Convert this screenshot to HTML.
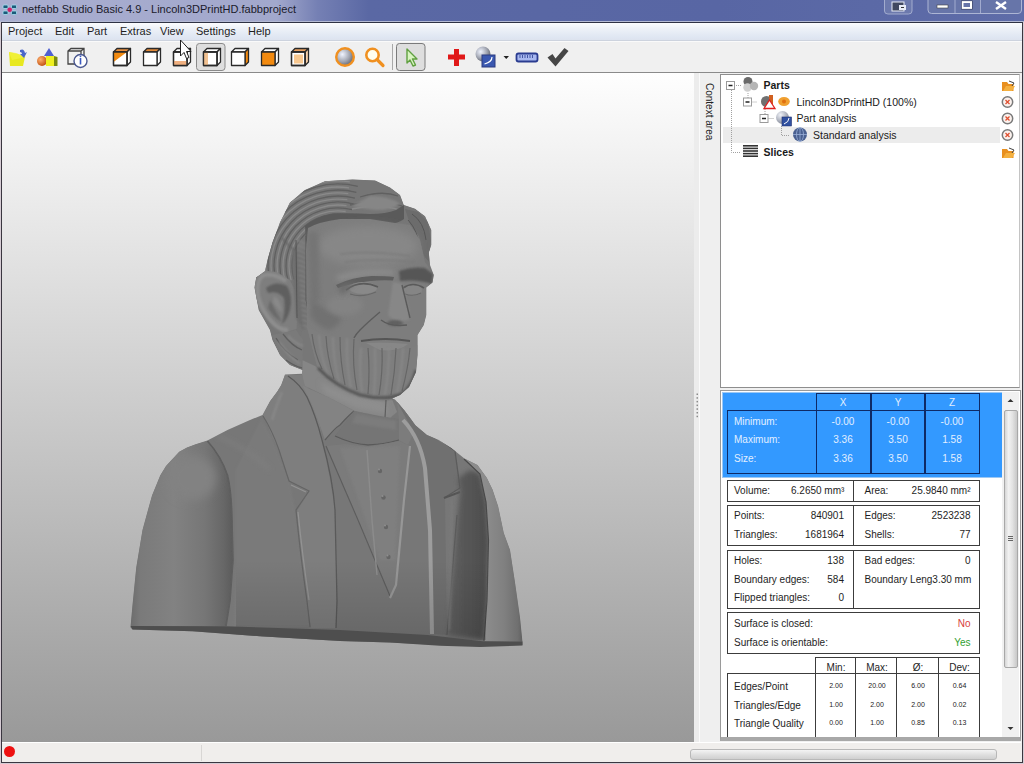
<!DOCTYPE html>
<html><head><meta charset="utf-8">
<style>
*{box-sizing:border-box}
html,body{margin:0;padding:0;width:1024px;height:764px;overflow:hidden;background:#d6ccd4;font-family:"Liberation Sans",sans-serif}
.a{position:absolute}
#title{left:0;top:0;width:1024px;height:22px;background:linear-gradient(90deg,#a9aed0 0%,#a2a8cc 27%,#7580b4 31%,#5a68a4 36%,#5866a4 70%,#5e6ca8 100%);border-bottom:1px solid #b4bad4}
#ttxt{left:22px;top:3px;font-size:11px;color:#1a1a2a;white-space:nowrap}
#frame{left:1px;top:22px;width:1022px;height:741px;background:#f0f0f0;border:1px solid #3a3640;border-top-color:#2e3244}
#menu{left:2px;top:23px;width:1020px;height:18px;background:linear-gradient(#fbfcfe 0%,#eef2f8 30%,#dfe6f2 85%,#dde3ee 100%);border-bottom:1px solid #cdd3de}
.mi{position:absolute;top:2px;font-size:11px;color:#1e1e1e;white-space:nowrap}
#tool{left:2px;top:41px;width:1020px;height:32px;background:#f0f0f0;border-top:1px solid #fafafa;border-bottom:1px solid #8a8a8a}
#view{left:2px;top:73px;width:692px;height:669px;background:linear-gradient(#fefefe,#999)}
#split{left:694px;top:73px;width:6px;height:669px;background:#ececec}
#ctx{left:700px;top:73px;width:20px;height:667px;background:#efefef}
#ctxt{left:715px;top:83px;font-size:10px;color:#222;transform-origin:0 0;transform:rotate(90deg);white-space:nowrap}
#tree{left:720px;top:74px;width:300px;height:314px;background:#fff;border:1px solid #8e8e8e;border-right-color:#c4c4c4}
#stats{left:720px;top:390px;width:301px;height:351px;background:#fff;border:1px solid #9a9a9a;border-bottom:4px solid #a8a8a8;overflow:hidden}
#status{left:2px;top:742px;width:1019px;height:20px;background:#f0eeec;border-top:1px solid #fff}

.t{position:absolute;font-size:10px;line-height:12px;white-space:nowrap;color:#1e1e1e;margin-top:1px}
.tr{position:absolute;font-size:10.5px;line-height:13px;white-space:nowrap;color:#1a1a1a}
.tb{font-weight:bold;font-size:10.5px}
.w{color:#e2efff;margin-top:0}
.bx{position:absolute;border:1px solid #3c3c3c}
.vl{position:absolute;width:1px;background:#3c3c3c}
.nv{position:absolute;border:1.5px solid #0e2a66}
.nvl{position:absolute;width:1.5px;background:#0e2a66}
.c{text-align:center}
.r{text-align:right}
.sm{font-size:7px;line-height:9px;color:#222;margin-top:-0.5px}
</style></head><body>
<div id="title" class="a"></div>
<div id="ttxt" class="a">netfabb Studio Basic 4.9 - Lincoln3DPrintHD.fabbproject</div>
<svg class="a" style="left:0;top:0" width="1024" height="22">
<g><rect x="3" y="5" width="5" height="3.5" rx="1" fill="#1a5a7a" stroke="#a8e0f0" stroke-width=".8"/><rect x="11.5" y="5" width="5" height="3.5" rx="1" fill="#1a5a7a" stroke="#a8e0f0" stroke-width=".8"/><rect x="3" y="11" width="5" height="3.5" rx="1" fill="#1a5a7a" stroke="#a8e0f0" stroke-width=".8"/><rect x="11.5" y="11" width="5" height="3.5" rx="1" fill="#1a5a7a" stroke="#a8e0f0" stroke-width=".8"/><circle cx="9.7" cy="9.7" r="2.3" fill="#d0206a"/></g>
<path d="M884.5,-2 V11 Q884.5,14 888,14 H908.5 Q912,14 912,11 V-2" fill="#7480b0" stroke="#c0c8e0" stroke-width="1" opacity=".7"/>
<rect x="892" y="2" width="12" height="9" fill="#404860" stroke="#e8ecf8" stroke-width="1"/><rect x="899" y="5" width="7" height="5" fill="#e8ecf8"/><path d="M901,7.5 h3" stroke="#333" stroke-width="1"/>
<path d="M928,-2 V10 Q928,13.5 931.5,13.5 H1018 Q1021.5,13.5 1021.5,10 V-2" fill="#6a78aa" stroke="#c0c8e0" stroke-width="1" opacity=".8"/>
<path d="M955,0 V13 M980.5,0 V13" stroke="#b0b8d8" stroke-width="1" opacity=".8"/>
<rect x="937" y="5" width="11" height="3" fill="#fff" stroke="#444" stroke-width=".6"/>
<rect x="962.5" y="2" width="8.5" height="6" fill="none" stroke="#fff" stroke-width="2"/><rect x="961.3" y="0.8" width="11" height="8.4" fill="none" stroke="#3a4060" stroke-width=".6"/>
<path d="M996,2 L1006,9 M1006,2 L996,9" stroke="#fff" stroke-width="2.4"/>
</svg>
<div id="frame" class="a"></div>
<div id="menu" class="a">
<span class="mi" style="left:6px">Project</span>
<span class="mi" style="left:53px">Edit</span>
<span class="mi" style="left:85px">Part</span>
<span class="mi" style="left:118px">Extras</span>
<span class="mi" style="left:158px">View</span>
<span class="mi" style="left:194px">Settings</span>
<span class="mi" style="left:246px">Help</span>
</div>
<div id="tool" class="a"></div>
<svg class="a" style="left:0;top:40px" width="600" height="33" viewBox="0 40 600 33">
<defs>
<radialGradient id="gsph" cx=".35" cy=".35" r=".7"><stop offset="0" stop-color="#f0f4ff"/><stop offset=".6" stop-color="#a0a4b0"/><stop offset="1" stop-color="#606470"/></radialGradient>
<radialGradient id="gor" cx=".35" cy=".35" r=".7"><stop offset="0" stop-color="#ffb070"/><stop offset="1" stop-color="#c05010"/></radialGradient>
</defs>
<!-- open project -->
<path d="M9,52 L18,54 L25,57 L23,66 L10,66 Z" fill="#e8e820"/><path d="M9,52 L16,53 L26,57 L12,60 Z" fill="#f4f440" opacity=".7"/>
<path d="M20,50 Q24,48 25,53 L27,52 L24,58 L20,54 L22,54 Q22,52 20,52 Z" fill="#4a66c8"/>
<!-- new part -->
<circle cx="42" cy="61" r="5" fill="url(#gor)"/>
<path d="M49,48 L54,56 L44,56 Z" fill="#5060d0"/>
<rect x="46" y="56" width="8" height="10" fill="#f0f020"/><path d="M54,56 L57.5,57 V66 L54,66 Z" fill="#7a8a10"/>
<!-- part info -->
<g fill="none" stroke="#444" stroke-width="1.3"><path d="M68,51 L71,48.5 H84 V61 L81,64 H68 Z M68,51 H81 V64 M81,51 L84,48.5"/></g>
<circle cx="80.5" cy="61" r="6.5" fill="#fff" stroke="#4a5890" stroke-width="1.4"/><path d="M80.5,58 V64.5" stroke="#3a58c0" stroke-width="1.6"/><circle cx="80.5" cy="56.3" r=".9" fill="#3a58c0"/>
<!-- cubes -->
<g stroke="#2a2a2a" stroke-width="1.3" stroke-linejoin="round">
<g transform="translate(113,48)"><path d="M0.5,4 L4,0.5 H17.5 L14,4 Z" fill="#e89040"/><path d="M14,4 L17.5,0.5 V14 L14,17.5 Z" fill="#fff"/><path d="M0.5,4 H14 V17.5 H0.5 Z" fill="#fff"/><path d="M0.5,4 H14 L0.5,14 Z" fill="#f28a10" stroke="none"/><path d="M0.5,4 H14 V17.5 H0.5 Z" fill="none"/></g>
<g transform="translate(143,48)"><path d="M0.5,4 L4,0.5 H17.5 L14,4 Z" fill="#e08838"/><path d="M14,4 L17.5,0.5 V14 L14,17.5 Z" fill="#fff"/><path d="M0.5,4 H14 V17.5 H0.5 Z" fill="#fff"/></g>
<g transform="translate(173,48)"><path d="M0.5,4 L4,0.5 H17.5 L14,4 Z" fill="#fff"/><path d="M14,4 L17.5,0.5 V14 L14,17.5 Z" fill="#fff"/><path d="M0.5,4 H14 V17.5 H0.5 Z" fill="#fff"/><rect x="1" y="13" width="12.5" height="4" fill="#f0b080" stroke="none"/><path d="M0.5,4 H14 V17.5 H0.5 Z" fill="none"/></g>
</g>
<!-- pressed button -->
<rect x="196.5" y="43.5" width="28.5" height="27" rx="3" fill="#dedede" stroke="#8a8a8a" stroke-width="1"/>
<g stroke="#2a2a2a" stroke-width="1.3" stroke-linejoin="round">
<g transform="translate(203,48)"><path d="M0.5,4 L4,0.5 H17.5 L14,4 Z" fill="#fff"/><path d="M14,4 L17.5,0.5 V14 L14,17.5 Z" fill="#fff"/><path d="M0.5,4 H14 V17.5 H0.5 Z" fill="#fff"/><rect x="1" y="4.5" width="4" height="12.5" fill="#f0c090" stroke="none"/><path d="M0.5,4 H14 V17.5 H0.5 Z" fill="none"/></g>
<g transform="translate(231,48)"><path d="M0.5,4 L4,0.5 H17.5 L14,4 Z" fill="#fff"/><path d="M14,4 L17.5,0.5 V14 L14,17.5 Z" fill="#f28a10"/><path d="M0.5,4 H14 V17.5 H0.5 Z" fill="#fff"/></g>
<g transform="translate(261,48)"><path d="M0.5,4 L4,0.5 H17.5 L14,4 Z" fill="#fff"/><path d="M14,4 L17.5,0.5 V14 L14,17.5 Z" fill="#fff"/><path d="M0.5,4 H14 V17.5 H0.5 Z" fill="#f28a10"/></g>
<g transform="translate(291,48)"><path d="M0.5,4 L4,0.5 H17.5 L14,4 Z" fill="#e8a060"/><path d="M14,4 L17.5,0.5 V14 L14,17.5 Z" fill="#f8d0a8"/><path d="M0.5,4 H14 V17.5 H0.5 Z" fill="#fff"/><rect x="3" y="6.5" width="9" height="9" fill="#f8c890" stroke="none"/><path d="M0.5,4 H14 V17.5 H0.5 Z" fill="none"/></g>
</g>
<!-- sphere -->
<circle cx="345" cy="57" r="8.8" fill="url(#gsph)" stroke="#f09020" stroke-width="2.4"/>
<!-- magnifier -->
<circle cx="372.5" cy="55" r="6.2" fill="#fffef0" stroke="#f09020" stroke-width="2.6"/><path d="M377,59.5 L383,65.5" stroke="#f09020" stroke-width="3.2" stroke-linecap="round"/>
<!-- separator -->
<path d="M392.5,44 V70" stroke="#a8a8a8" stroke-width="1"/>
<!-- pressed select -->
<rect x="396.5" y="43.5" width="28.5" height="27" rx="3" fill="#dedede" stroke="#7a7a7a" stroke-width="1"/>
<path d="M407,49 L407,63 L410,60 L413,66 L415.5,65 L412.5,59 L417,59 Z" fill="#d8f4c0" stroke="#60a040" stroke-width="1.4" stroke-linejoin="round"/>
<!-- red cross -->
<path d="M454,49 h5 v5.5 h6 v5 h-6 v6.5 h-5 v-6.5 h-6 v-5 h6 z" fill="#e01818"/>
<!-- analysis -->
<circle cx="483" cy="54" r="7.5" fill="url(#gsph)"/><rect x="482" y="55" width="13" height="12" fill="#3a58b0" stroke="#2a3a80" stroke-width="1"/><path d="M484.5,64 Q492,62 492,57" stroke="#fff" stroke-width="1.2" fill="none"/>
<path d="M503.5,56 h5.5 l-2.75,3 z" fill="#222"/>
<!-- ruler -->
<rect x="516.5" y="53.5" width="21" height="8" rx="2" fill="#a8b8f0" stroke="#2a3c90" stroke-width="1.8"/>
<path d="M520,55 v3 M522.5,55 v3 M525,55 v3 M527.5,55 v3 M530,55 v3 M532.5,55 v3" stroke="#2a3c90" stroke-width=".8"/>
<!-- check -->
<path d="M547.5,57.5 L552.5,54 L555.5,58.5 L564.5,48 L568.5,51 L555.5,66.5 Z" fill="#464646"/>
<!-- mouse cursor -->
<path d="M180.5,40 L180.5,56 L184,52.5 L186.5,58.5 L189,57.5 L186.5,51.5 L191,51.5 Z" fill="#fff" stroke="#222" stroke-width="1" stroke-linejoin="round"/>
</svg>
<div id="view" class="a"></div>
<svg class="a" style="left:2px;top:73px" width="692" height="669" viewBox="2 73 692 669">
<defs>
<filter id="bl0" x="-20%" y="-20%" width="140%" height="140%"><feGaussianBlur stdDeviation=".6"/></filter>
<filter id="bl1" x="-20%" y="-20%" width="140%" height="140%"><feGaussianBlur stdDeviation="1.1"/></filter>
<filter id="bl2" x="-30%" y="-30%" width="160%" height="160%"><feGaussianBlur stdDeviation="2.5"/></filter>
<filter id="bl3" x="-30%" y="-30%" width="160%" height="160%"><feGaussianBlur stdDeviation="5"/></filter>
<linearGradient id="gsl" x1="130" y1="0" x2="234" y2="0" gradientUnits="userSpaceOnUse"><stop offset="0" stop-color="#6c6c6c"/><stop offset=".1" stop-color="#7a7a7a"/><stop offset=".42" stop-color="#828282"/><stop offset=".72" stop-color="#767676"/><stop offset=".9" stop-color="#676767"/><stop offset="1" stop-color="#5a5a5a"/></linearGradient>
<linearGradient id="grs" x1="486" y1="0" x2="522" y2="0" gradientUnits="userSpaceOnUse"><stop offset="0" stop-color="#8c8c8c"/><stop offset=".5" stop-color="#808080"/><stop offset=".88" stop-color="#707070"/><stop offset="1" stop-color="#626262"/></linearGradient>
<linearGradient id="grc" x1="446" y1="0" x2="488" y2="0" gradientUnits="userSpaceOnUse"><stop offset="0" stop-color="#626262"/><stop offset=".5" stop-color="#565656"/><stop offset="1" stop-color="#4c4c4c"/></linearGradient>
<linearGradient id="gbot" x1="0" y1="560" x2="0" y2="636" gradientUnits="userSpaceOnUse"><stop offset="0" stop-color="#000" stop-opacity="0"/><stop offset="1" stop-color="#000" stop-opacity=".13"/></linearGradient>
<clipPath id="csil"><path d="M280,222.5 L290,202.5 L305,190 L325,181.25 L352.5,179.5 L375,180.5 L390,187.5 L400,195 L403.75,205 L415,208.75 L425,216.25 L431.25,230 L431.25,245 L428.75,252.5 L430,265 L433.75,275 L432.5,282.5 L426.25,287.5 L426.25,300 L426.25,315 L423.75,325 L417.5,335 L417.5,355 L416,372 L409,387 L400,395 L392,398.5 L395,399.4 L404.4,410.6 L415.6,425.6 L426.9,435 L438.1,439.7 L451.25,448.1 L464.4,458.4 L477.5,465 L486.9,478.1 L492.5,489.4 L498.1,506.25 L503.75,533 L510,550 L515,582.5 L520,617.5 L522.5,642.5 L522.5,645 L480,646.25 L440,645 L390,642.5 L340,641 L260,636.25 L192.5,631.25 L132.5,629.5 L130.5,627.5 L132.5,605 L136.25,567.5 L142.5,530 L152,495.4 L160.3,475.3 L166,466 L172,459.4 L179.2,451.8 L187,447.5 L195.7,444.2 L207.4,440.4 L227.5,430 L250,420 L262.5,415 L270,401.25 L277.5,391.25 L281.25,385 L285,374.4 L302,373.75 L302.5,370 L290,365 L280,355 L272.5,340 L270,330 L258.75,310 L254.5,287.5 L256.25,277.5 L265,271.25 L267.5,260 L272.5,242.5 Z"/></clipPath>
</defs>
<!-- silhouette -->
<path fill="#777" d="M280,222.5 L290,202.5 L305,190 L325,181.25 L352.5,179.5 L375,180.5 L390,187.5 L400,195 L403.75,205 L415,208.75 L425,216.25 L431.25,230 L431.25,245 L428.75,252.5 L430,265 L433.75,275 L432.5,282.5 L426.25,287.5 L426.25,300 L426.25,315 L423.75,325 L417.5,335 L417.5,355 L416,372 L409,387 L400,395 L392,398.5 L395,399.4 L404.4,410.6 L415.6,425.6 L426.9,435 L438.1,439.7 L451.25,448.1 L464.4,458.4 L477.5,465 L486.9,478.1 L492.5,489.4 L498.1,506.25 L503.75,533 L510,550 L515,582.5 L520,617.5 L522.5,642.5 L522.5,645 L480,646.25 L440,645 L390,642.5 L340,641 L260,636.25 L192.5,631.25 L132.5,629.5 L130.5,627.5 L132.5,605 L136.25,567.5 L142.5,530 L152,495.4 L160.3,475.3 L166,466 L172,459.4 L179.2,451.8 L187,447.5 L195.7,444.2 L207.4,440.4 L227.5,430 L250,420 L262.5,415 L270,401.25 L277.5,391.25 L281.25,385 L285,374.4 L302,373.75 L302.5,370 L290,365 L280,355 L272.5,340 L270,330 L258.75,310 L254.5,287.5 L256.25,277.5 L265,271.25 L267.5,260 L272.5,242.5 Z"/>

<g clip-path="url(#csil)">
<!-- ===== BODY ===== -->
<!-- left sleeve -->
<path fill="url(#gsl)" d="M195.7,444.2 L207.4,441 Q221,456 227.5,475.3 Q232,493 232.2,530 L233,560 L230,601 L226,626 L130.5,626 L132.5,605 L136.25,567.5 L142.5,530 L152,495.4 L160.3,475.3 L166,466 L172,459.4 L179.2,451.8 L187,447.5 Z"/>
<ellipse cx="192" cy="478" rx="24" ry="22" fill="#828282" filter="url(#bl3)"/>

<path fill="none" stroke="#5e5e5e" stroke-width="1.6" filter="url(#bl0)" d="M207.4,441 Q221,456 227.5,475.3 Q232,493 232.2,530 L233,560 L230,601 L226,626"/>
<!-- left coat body -->
<path fill="#7a7a7a" filter="url(#bl1)" d="M236,470 L262,418 L275,445 L290,482 L295,510 L307,601 L310,626 L234,626 L236,560 Z"/>
<path fill="none" stroke="#7f7f7f" stroke-width="3" filter="url(#bl2)" d="M218,436 Q250,450 270,470"/>
<!-- left lapel -->
<path fill="#7e7e7e" filter="url(#bl0)" d="M285,375 L302,375 L310,392 L318,415 L322,438 L330,480 L335,510 L337,601 L336,628 L311,628 L307,601 L300,550 L297,511 L309,492 L290,482 L277,447 L263,415 L270,401 L281,385 Z"/>
<path fill="none" stroke="#5a5a5a" stroke-width="1.3" filter="url(#bl0)" d="M288,376 Q300,384 307,397 Q316,416 322,440 Q333,480 335,510 L337,601 L336,628"/>
<path fill="none" stroke="#656565" stroke-width="1.2" filter="url(#bl0)" d="M263,416 Q272,430 279,450 L289,481 L309,491 L296,510 Q300,552 307,601 L310,627"/>
<path fill="none" stroke="#939393" stroke-width="1.2" filter="url(#bl0)" d="M291,485 L306,492 M298,512 Q302,552 309,600"/>
<path fill="none" stroke="#8a8a8a" stroke-width="2" filter="url(#bl1)" d="M282,392 Q275,410 272,420"/>

<!-- neck -->
<path fill="#868686" filter="url(#bl0)" d="M302,360 L315,366 L330,380 L350,391 L372,398 L392,399 L397,412 L390,418 L355,411 L330,398 L305,386 L302,374 Z"/>
<path fill="#8e8e8e" filter="url(#bl2)" d="M320,382 L350,395 L385,402 L388,414 L355,408 L325,394 Z"/>
<path fill="none" stroke="#5e5e5e" stroke-width="1.2" filter="url(#bl0)" d="M386,400 L385,418"/>
<!-- shirt collar wing (left) -->
<path fill="#838383" filter="url(#bl0)" d="M303,386 L330,398 L354,411 L340,425 L325,440 L318,420 L310,400 Z"/>
<path fill="none" stroke="#5c5c5c" stroke-width="1.2" filter="url(#bl0)" d="M325,440 Q335,428 340,425 Q348,416 354,411"/>
<!-- collar band -->
<path fill="#747474" filter="url(#bl0)" d="M354,411 L378,416 L399,419 L399,440 L368,445 L335,436 Z"/>
<path fill="#7c7c7c" filter="url(#bl1)" d="M356,414 L396,421 L396,430 L352,423 Z"/>
<path fill="none" stroke="#5a5a5a" stroke-width="1.3" filter="url(#bl0)" d="M335,436 Q352,444 368,445 Q386,444 399,440"/>
<!-- shirt right wing -->
<path fill="#7c7c7c" filter="url(#bl0)" d="M397,400 L410,412 L415,430 L408,445 L399,440 L399,419 Z"/>
<!-- vest / shirt front -->
<path fill="#7b7b7b" d="M326,446 L345,444 L368,447 L399,441 L410,446 L404,500 L396,585 L390,597 Z"/>
<path fill="#7f7f7f" filter="url(#bl1)" d="M340,448 L400,446 L395,560 L380,560 Z"/>
<path fill="none" stroke="#5e5e5e" stroke-width="1.2" filter="url(#bl0)" d="M326,446 L358,520 L390,596"/>
<path fill="none" stroke="#979797" stroke-width="2.2" filter="url(#bl0)" d="M410,446 L404,500 L396,585 L390,598"/>
<path fill="none" stroke="#8c8c8c" stroke-width="1.4" filter="url(#bl0)" d="M367,450 L372,520 L377,575"/>
<g fill="#656565" filter="url(#bl0)"><circle cx="380" cy="471" r="2.2"/><circle cx="383.5" cy="497.5" r="2.2"/><circle cx="386" cy="527" r="2.2"/><circle cx="388.5" cy="557" r="2.2"/></g>
<g fill="#8e8e8e" filter="url(#bl0)"><circle cx="379" cy="469.5" r="1"/><circle cx="382.5" cy="496" r="1"/><circle cx="385" cy="525.5" r="1"/><circle cx="387.5" cy="555.5" r="1"/></g>
<!-- right lapel -->
<path fill="#707070" filter="url(#bl0)" d="M396,400 L410,414 L426,432 L455,452 L460,488 L445,498 L447,635 L432,634 L431,540 L426,470 L418,440 Z"/>
<path fill="none" stroke="#9d9d9d" stroke-width="4" filter="url(#bl0)" d="M403,420 Q420,438 425,468 L430,530 L432,634"/>
<path fill="none" stroke="#5c5c5c" stroke-width="1.3" filter="url(#bl0)" d="M398,402 Q425,430 455,451 L460,488 L444,498 M457,515 L447,635"/>
<path fill="none" stroke="#555" stroke-width="2" filter="url(#bl0)" d="M444,498 L460,492"/>
<!-- right coat darker -->
<path fill="url(#grc)" filter="url(#bl2)" d="M458,478 L470,470 L480,474 L486,502 L488.5,540 L487,600 L484,640 L447.5,635 L457.5,515 L460,492 Z"/>
<path fill="none" stroke="#7a7a7a" stroke-width="2" filter="url(#bl1)" d="M452,500 L449,630"/>
<!-- right sleeve -->
<path fill="url(#grs)" d="M464.4,458.4 L477.5,465 L486.9,478.1 L492.5,489.4 L498.1,506.25 L503.75,533 L510,550 L515,582.5 L520,617.5 L522.5,641.5 L484,641.25 L487,600 L488.5,540 L486,502 L480,474 Z"/>
<path fill="none" stroke="#4a4a4a" stroke-width="1.2" filter="url(#bl0)" d="M464,459 L480,474 L486,502 L488.5,540 L487,600 L484,641"/>

<!-- ===== HEAD ===== -->
<!-- hair base -->
<path fill="#767676" d="M272.5,242.5 L280,222.5 L290,202.5 L305,190 L325,181.25 L352.5,179.5 L375,180.5 L390,187.5 L400,195 L403.75,205 L415,208.75 L425,216.25 L431.25,230 L431.25,245 L428.75,252.5 L430,265 L425,262 L420,240 L410,224 L395,222 L370,218 L340,218 L318,222 L308,228 L306,250 L307,290 L312,320 L303,326 L300,340 L302.5,370 L290,365 L280,355 L272.5,340 L270,330 L258.75,310 L254.5,287.5 L256.25,277.5 L265,271.25 L267.5,260 Z"/>
<!-- front lock highlight -->
<!-- hair grooves -->
<path fill="none" stroke="#606060" stroke-width="1.3" filter="url(#bl0)" d="M294.0,279.4 A46,46 0 0 1 349.1,221.4 M288.3,281.2 A52,52 0 0 1 350.6,215.5 M282.5,283.0 A58,58 0 0 1 352.0,209.7 M276.8,284.7 A64,64 0 0 1 353.5,203.9 M271.1,286.5 A70,70 0 0 1 354.9,198.1 M265.3,288.2 A76,76 0 0 1 356.4,192.3 M259.6,290.0 A82,82 0 0 1 357.8,186.4 M350,205 Q378,198 402,206 M360,197 Q382,190 398,196"/>
<path fill="none" stroke="#8a8a8a" stroke-width="1.3" filter="url(#bl0)" d="M291.1,280.3 A49,49 0 0 1 344.8,217.5 M285.4,282.1 A55,55 0 0 1 345.7,211.5 M279.7,283.8 A61,61 0 0 1 346.5,205.6 M273.9,285.6 A67,67 0 0 1 347.3,199.7 M268.2,287.3 A73,73 0 0 1 348.2,193.7 M262.5,289.1 A79,79 0 0 1 349.0,187.8 M256.7,290.9 A85,85 0 0 1 349.8,181.8 M352,209 Q378,203 400,210"/>
<path fill="none" stroke="#626262" stroke-width="1.6" filter="url(#bl1)" d="M282,238 Q292,250 303,256"/>
<!-- front lock shadow -->
<path fill="#5a5a5a" filter="url(#bl0)" d="M305,226 Q315,217 333,213.5 Q355,213 370,214 Q386,214 396,210 L404,205 L404,219 Q396,225 384,223 Q366,220 348,219 Q328,220 312,228 Q308,236 306,244 Z"/>
<path fill="#868686" filter="url(#bl1)" d="M370,196 Q390,196 400,204 Q392,210 376,210 Q360,208 352,206 Z"/>
<!-- right hair -->
<path fill="#6c6c6c" filter="url(#bl0)" d="M405,209 L418,212 L428,222 L431,240 L429,262 L424,256 L419,236 L410,224 Z"/>
<path fill="none" stroke="#555" stroke-width="1" filter="url(#bl0)" d="M412,214 Q424,222 426,240 M408,220 Q418,230 420,250"/>
<!-- left side hair grooves -->
<path fill="none" stroke="#5a5a5a" stroke-width="1" filter="url(#bl0)" d="M288,336 Q296,350 300,368 M278,338 Q286,352 292,362"/>
<!-- ear -->
<path fill="#7e7e7e" filter="url(#bl0)" d="M255.3,280 L258,273.3 L263.3,270.6 L276.6,272 L289.8,280 L296.5,293.2 L297.8,313 L296.5,329 L283.2,333 L270,322.4 L260.6,310.5 L255.3,297.2 Z"/>
<path fill="none" stroke="#8e8e8e" stroke-width="4" filter="url(#bl1)" d="M286,281 Q272,272 262,276 Q256,282 258,296 Q262,312 274,324 Q280,330 288,330"/>
<path fill="#5e5e5e" filter="url(#bl1)" d="M266,288 Q276,280 287,286 Q293,296 290,310 Q287,320 282,324 Q286,310 284,298 Q278,290 268,293 Z"/>
<path fill="#6a6a6a" filter="url(#bl1)" d="M270,300 Q276,312 282,322 Q274,318 268,308 Z"/>
<path fill="#898989" filter="url(#bl1)" d="M274,296 Q281,300 282,312 Q278,310 273,302 Z"/>
<!-- rope hair between ear and face -->
<path fill="#6e6e6e" filter="url(#bl1)" d="M292,250 L306,250 L307,290 L312,320 L303,330 L296,318 L294,290 Z"/>
<path fill="none" stroke="#808080" stroke-width="1.8" filter="url(#bl1)" d="M296.0,240 q5,1 9,4 M296.4,245 q5,1 9,4 M296.8,250 q5,1 9,4 M297.2,255 q5,1 9,4 M297.6,260 q5,1 9,4 M298.0,265 q5,1 9,4 M298.4,270 q5,1 9,4 M298.8,275 q5,1 9,4 M299.2,280 q5,1 9,4 M299.6,285 q5,1 9,4 M300.0,290 q5,1 9,4 M300.4,295 q5,1 9,4 M300.8,300 q5,1 9,4 M301.2,305 q5,1 9,4 M301.6,310 q5,1 9,4 M302.0,315 q5,1 9,4 M302.4,320 q5,1 9,4 M302.8,325 q5,1 9,4"/>
<path fill="none" stroke="#555" stroke-width="1" filter="url(#bl0)" d="M296,240 L297,318 M306,236 L306,300 L310,322"/>
<!-- hair behind ear -->
<path fill="#7a7a7a" filter="url(#bl0)" d="M272,335 L283,333 L296,330 L303,340 L302.5,370 L290,365 L280,355 Z"/>
<path fill="none" stroke="#5e5e5e" stroke-width="1.3" filter="url(#bl0)" d="M276,338 Q284,352 298,360 M283,334 Q292,346 302,350 M286,360 Q294,366 302,368"/>
<path fill="none" stroke="#8c8c8c" stroke-width="1.5" filter="url(#bl1)" d="M279,342 Q288,355 300,364 M288,336 Q296,344 303,346"/>
<!-- face -->
<path fill="#7d7d7d" d="M308,228 Q318,222 340,219 L370,219 L395,223 L410,225 L420,240 L425,262 L433.75,275 L432.5,282.5 L426.25,287.5 L426.25,315 L423.75,325 L417.5,335 L417.5,355 L416,372 L409,387 L400,395 L392,398.5 L370,398 L350,391 L330,380 L317,366 L307,327 L306,250 Z"/>
<ellipse cx="368" cy="246" rx="50" ry="20" fill="#878787" filter="url(#bl3)"/>
<path fill="none" stroke="#7a7a7a" stroke-width="1.5" filter="url(#bl1)" d="M340,254 Q370,250 410,256 M345,262 Q375,258 415,262"/>
<path fill="#747474" filter="url(#bl2)" d="M308,232 L318,232 L320,300 L310,305 Z"/>
<!-- cheek -->
<path fill="#717171" filter="url(#bl2)" d="M312,300 Q325,310 342,318 Q338,328 328,330 Q315,325 310,315 Z"/>
<ellipse cx="345" cy="305" rx="18" ry="10" fill="#838383" filter="url(#bl2)"/>
<!-- brows -->
<path fill="#8a8a8a" filter="url(#bl2)" d="M336,276 Q360,266 394,270 L394,276 Q370,274 338,282 Z"/>
<path fill="#5e5e5e" filter="url(#bl0)" d="M336,285 Q352,277 372,276 Q386,276 394,277 L393,280.5 Q380,280 370,281 Q352,283 338,288 Z"/>
<path fill="#575757" filter="url(#bl1)" d="M399,271 Q412,266 425,268 L433,274 L432,284 Q418,279 400,281 Z"/>
<!-- eyes -->
<ellipse cx="363" cy="288" rx="14" ry="6" fill="#898989" filter="url(#bl0)"/>
<path fill="none" stroke="#5a5a5a" stroke-width="1.8" filter="url(#bl0)" d="M346,290 Q360,279 378,287"/>
<path fill="none" stroke="#686868" stroke-width="1.1" filter="url(#bl0)" d="M350,294 Q362,298 376,292"/>
<path fill="#6c6c6c" filter="url(#bl2)" d="M338,286 Q350,282 356,283 Q345,290 342,296 Z"/>
<ellipse cx="413" cy="290" rx="9" ry="6" fill="#858585" filter="url(#bl0)"/>
<path fill="none" stroke="#5a5a5a" stroke-width="1.7" filter="url(#bl0)" d="M403,288 Q413,281 424,288"/>
<path fill="none" stroke="#676767" stroke-width="1.1" filter="url(#bl0)" d="M405,294 Q413,297 421,293"/>
<!-- nose -->
<path fill="#878787" filter="url(#bl1)" d="M393,282 L402,284 L409,310 L409,320 L396,322 L388,315 Z"/>
<ellipse cx="395" cy="323" rx="8" ry="3" fill="#606060" filter="url(#bl1)"/>
<path fill="none" stroke="#5a5a5a" stroke-width="1.4" filter="url(#bl0)" d="M402,285 L410,318 M381,320 Q390,327 407,325"/>
<path fill="none" stroke="#5c5c5c" stroke-width="1.4" filter="url(#bl0)" d="M380,312 Q368,322 360,330 Q356,334 354,338"/>
<!-- mouth -->
<path fill="none" stroke="#545454" stroke-width="1.8" filter="url(#bl0)" d="M361,341 Q385,337 410,341"/>
<path fill="#878787" filter="url(#bl0)" d="M366,343 Q388,342 408,344 Q398,352 380,350 Z"/>
<!-- beard -->
<path fill="#7e7e7e" filter="url(#bl0)" d="M307,327 L318,332 L338,340 L356,339 L364,348 L385,352 L410,348 L417.5,345 L417.5,355 L416,372 L409,387 L400,395 L392,398.5 L370,398 L350,391 L330,380 L317,366 Z"/>
<path fill="none" stroke="#666" stroke-width="1.2" filter="url(#bl0)" d="M312,334 Q314,352 322,369 M326,336 Q327,357 334,379 M340,337 Q340,361 345,385 M354,339 Q352,365 357,390 M368,348 Q370,371 368,394 M382,348 Q383,372 379,395 M396,348 Q395,372 391,395 M410,348 Q408,369 402,391"/>
<path fill="none" stroke="#8a8a8a" stroke-width="1.6" filter="url(#bl1)" d="M319,335 Q320,355 328,375 M333,337 Q333,359 339,382 M347,338 Q346,363 351,388 M361,348 Q359,370 362,392 M375,348 Q376,372 374,395 M389,348 Q389,372 385,395 M403,348 Q402,371 397,393"/>
<path fill="none" stroke="#575757" stroke-width="3" filter="url(#bl1)" d="M318,368 Q335,386 360,395 Q385,401 402,394 Q412,386 416,370"/>

<rect x="236" y="560" width="250" height="80" fill="url(#gbot)"/>
</g>
<!-- bottom shadow band -->
<path fill="#4e4e4e" d="M130.5,626 L225,626.25 L340,630 L427.5,635 L482.5,641.25 L522.5,641.5 L522.5,645.5 L480,647 L440,645.8 L390,642.5 L340,641 L260,636.25 L192.5,631.25 L132.5,629.5 Z"/>
</svg>

<div id="split" class="a"></div>
<div id="ctx" class="a"></div>
<div class="a" style="left:699px;top:73px;width:1px;height:669px;background:#fafafa"></div>
<svg class="a" style="left:694px;top:390px" width="6" height="30"><g fill="#8a8a8a"><rect x="2.5" y="3.5" width="1.5" height="1.5"/><rect x="2.5" y="7.2" width="1.5" height="1.5"/><rect x="2.5" y="10.9" width="1.5" height="1.5"/><rect x="2.5" y="14.6" width="1.5" height="1.5"/><rect x="2.5" y="18.3" width="1.5" height="1.5"/><rect x="2.5" y="22" width="1.5" height="1.5"/><rect x="2.5" y="25.7" width="1.5" height="1.5"/></g></svg>
<div id="ctxt" class="a">Context area</div>
<div id="tree" class="a">
<div class="a" style="left:2px;top:52px;width:277px;height:16px;background:#ececec"></div>
</div>
<svg class="a" style="left:720px;top:73px" width="300" height="100" viewBox="720 73 300 100">
<g stroke="#a0a0a0" stroke-width="1" stroke-dasharray="1,1" fill="none">
<path d="M731.5,90 V152.5 H740 M734,85.5 H741 M748,93 V98 M751.5,102 H757 M765,109 V114 M767.5,118.5 H774 M781.5,126 V135.5 H790"/>
</g>
<g fill="#fff" stroke="#9a9a9a"><rect x="726.5" y="81.5" width="8" height="8"/><rect x="743.5" y="98" width="8" height="8"/><rect x="760" y="114.5" width="8" height="8"/></g>
<g stroke="#222" stroke-width="1.3"><path d="M728.5,85.5 H732.5 M745.5,102 H749.5 M762,118.5 H766"/></g>
<!-- parts icon -->
<circle cx="748" cy="81.5" r="4.5" fill="#6a6a6a"/><circle cx="747.5" cy="87.5" r="4.2" fill="#d0d0d0"/><circle cx="754" cy="86" r="4.2" fill="#b5b5b5"/>
<!-- lincoln icon -->
<circle cx="766.5" cy="101.5" r="5.5" fill="#707070"/><path d="M769,95 h4 v9 h-4z" fill="#d06020"/>
<path d="M769.5,100 L775,108.5 H764 Z" fill="#fff" stroke="#e02020" stroke-width="1.3"/>
<ellipse cx="784" cy="101.5" rx="5.8" ry="4.5" fill="#f0a030"/><circle cx="784" cy="101.5" r="2" fill="#e07010"/>
<!-- part analysis icon -->
<radialGradient id="gpa" cx=".35" cy=".3" r=".8"><stop offset="0" stop-color="#f0f2f8"/><stop offset="1" stop-color="#7a8090"/></radialGradient><circle cx="782.5" cy="117.5" r="6.5" fill="url(#gpa)"/><rect x="782" y="117" width="9.5" height="9" fill="#3050a0" stroke="#203070" stroke-width=".6"/><path d="M784,124 Q789,122 789,118" stroke="#fff" stroke-width="1" fill="none"/>
<!-- globe -->
<circle cx="800" cy="134.5" r="7" fill="#4a6090"/><g stroke="#9ab0d8" stroke-width=".8" fill="none"><path d="M793,134.5 H807 M800,127.5 V141.5"/><ellipse cx="800" cy="134.5" rx="3.5" ry="7"/></g>
<!-- slices -->
<g fill="#333"><rect x="743" y="145" width="15" height="1.6"/><rect x="743" y="147.6" width="15" height="1.6"/><rect x="743" y="150.2" width="15" height="1.6"/><rect x="743" y="152.8" width="15" height="1.6"/><rect x="743" y="155.4" width="15" height="1.6"/></g>
<!-- right icons -->
<g><path d="M1002,82 h5 l1.5,2 h5 v7 h-11.5z" fill="#e89020"/><path d="M1003,91 l3,-5 h9 l-3,5z" fill="#f4b040"/><path d="M1009,81 l5,2 l-2,3" stroke="#444" fill="none" stroke-width="1"/></g>
<g fill="#fbf2ee" stroke="#7a7a7a" stroke-width="1.5"><circle cx="1007.5" cy="102" r="5.2"/><circle cx="1007.5" cy="118.5" r="5.2"/><circle cx="1007.5" cy="135" r="5.2"/></g>
<g stroke="#e05030" stroke-width="1.3"><path d="M1005.5,100 l4,4 m0,-4 l-4,4 M1005.5,116.5 l4,4 m0,-4 l-4,4 M1005.5,133 l4,4 m0,-4 l-4,4"/></g>
<g><path d="M1002,149 h5 l1.5,2 h5 v7 h-11.5z" fill="#e89020"/><path d="M1003,158 l3,-5 h9 l-3,5z" fill="#f4b040"/><path d="M1009,148 l5,2 l-2,3" stroke="#444" fill="none" stroke-width="1"/></g>
</svg>
<span class="tr tb" style="left:763.5px;top:79px">Parts</span>
<span class="tr" style="left:796.5px;top:95.5px">Lincoln3DPrintHD (100%)</span>
<span class="tr" style="left:796.5px;top:112px">Part analysis</span>
<span class="tr" style="left:813px;top:128.5px">Standard analysis</span>
<span class="tr tb" style="left:763.5px;top:145.5px">Slices</span>

<div id="stats" class="a">
<div class="a" style="left:1px;top:1px;width:281px;height:86px;background:#3399ff;border:1px solid #9cc8f4"></div>
<div class="nv" style="left:6px;top:18.5px;width:252.5px;height:64.5px"></div>
<div class="nv" style="left:94.5px;top:2px;width:164px;height:81px"></div>
<div class="nvl" style="left:149px;top:2px;height:81px"></div>
<div class="nvl" style="left:203px;top:2px;height:81px"></div>
<span class="t w c" style="left:95px;top:6px;width:54px">X</span>
<span class="t w c" style="left:150px;top:6px;width:54px">Y</span>
<span class="t w c" style="left:204px;top:6px;width:54px">Z</span>
<span class="t w" style="left:13px;top:24.5px">Minimum:</span>
<span class="t w" style="left:13px;top:43px">Maximum:</span>
<span class="t w" style="left:13px;top:61.5px">Size:</span>
<span class="t w c" style="left:95px;top:24.5px;width:54px">-0.00</span>
<span class="t w c" style="left:150px;top:24.5px;width:54px">-0.00</span>
<span class="t w c" style="left:204px;top:24.5px;width:54px">-0.00</span>
<span class="t w c" style="left:95px;top:43px;width:54px">3.36</span>
<span class="t w c" style="left:150px;top:43px;width:54px">3.50</span>
<span class="t w c" style="left:204px;top:43px;width:54px">1.58</span>
<span class="t w c" style="left:95px;top:61.5px;width:54px">3.36</span>
<span class="t w c" style="left:150px;top:61.5px;width:54px">3.50</span>
<span class="t w c" style="left:204px;top:61.5px;width:54px">1.58</span>

<div class="bx" style="left:5.5px;top:88.5px;width:253px;height:22px"></div>
<div class="vl" style="left:131.5px;top:88.5px;height:22px"></div>
<span class="t" style="left:13px;top:93px">Volume:</span>
<span class="t r" style="left:70px;top:93px;width:53px">6.2650 mm³</span>
<span class="t" style="left:143.5px;top:93px">Area:</span>
<span class="t r" style="left:180px;top:93px;width:69.5px">25.9840 mm²</span>

<div class="bx" style="left:5.5px;top:113.5px;width:253px;height:41.5px"></div>
<div class="vl" style="left:131.5px;top:113.5px;height:41.5px"></div>
<span class="t" style="left:13px;top:118px">Points:</span>
<span class="t r" style="left:70px;top:118px;width:53px">840901</span>
<span class="t" style="left:143.5px;top:118px">Edges:</span>
<span class="t r" style="left:180px;top:118px;width:69.5px">2523238</span>
<span class="t" style="left:13px;top:137px">Triangles:</span>
<span class="t r" style="left:70px;top:137px;width:53px">1681964</span>
<span class="t" style="left:143.5px;top:137px">Shells:</span>
<span class="t r" style="left:180px;top:137px;width:69.5px">77</span>

<div class="bx" style="left:5.5px;top:158.5px;width:253px;height:59px"></div>
<div class="vl" style="left:131.5px;top:158.5px;height:59px"></div>
<span class="t" style="left:13px;top:163px">Holes:</span>
<span class="t r" style="left:70px;top:163px;width:53px">138</span>
<span class="t" style="left:143.5px;top:163px">Bad edges:</span>
<span class="t r" style="left:180px;top:163px;width:69.5px">0</span>
<span class="t" style="left:13px;top:181.5px">Boundary edges:</span>
<span class="t r" style="left:70px;top:181.5px;width:53px">584</span>
<span class="t" style="left:143.5px;top:181.5px">Boundary Leng3.30 mm</span>
<span class="t" style="left:13px;top:200px">Flipped triangles:</span>
<span class="t r" style="left:70px;top:200px;width:53px">0</span>

<div class="bx" style="left:5.5px;top:221px;width:253px;height:41.5px"></div>
<span class="t" style="left:13px;top:226px">Surface is closed:</span>
<span class="t r" style="left:180px;top:226px;width:69.5px;color:#d84040">No</span>
<span class="t" style="left:13px;top:244.5px">Surface is orientable:</span>
<span class="t r" style="left:180px;top:244.5px;width:69.5px;color:#30a030">Yes</span>

<div class="bx" style="left:93.5px;top:265.5px;width:165px;height:90px"></div>
<div class="bx" style="left:5.5px;top:281.5px;width:253px;height:80px"></div>
<div class="vl" style="left:134px;top:265.5px;height:90px"></div>
<div class="vl" style="left:175px;top:265.5px;height:90px"></div>
<div class="vl" style="left:216.5px;top:265.5px;height:90px"></div>
<span class="t c" style="left:95px;top:270px;width:40px">Min:</span>
<span class="t c" style="left:136px;top:270px;width:40px">Max:</span>
<span class="t c" style="left:177px;top:270px;width:40px">Ø:</span>
<span class="t c" style="left:218px;top:270px;width:41px">Dev:</span>
<span class="t" style="left:13px;top:289px">Edges/Point</span>
<span class="t" style="left:13px;top:307.5px">Triangles/Edge</span>
<span class="t" style="left:13px;top:326px">Triangle Quality</span>
<span class="t" style="left:13px;top:344px">Edge Lengths</span>
<span class="t c sm" style="left:95px;top:290.5px;width:40px">2.00</span>
<span class="t c sm" style="left:136px;top:290.5px;width:40px">20.00</span>
<span class="t c sm" style="left:177px;top:290.5px;width:40px">6.00</span>
<span class="t c sm" style="left:218px;top:290.5px;width:41px">0.64</span>
<span class="t c sm" style="left:95px;top:309px;width:40px">1.00</span>
<span class="t c sm" style="left:136px;top:309px;width:40px">2.00</span>
<span class="t c sm" style="left:177px;top:309px;width:40px">2.00</span>
<span class="t c sm" style="left:218px;top:309px;width:41px">0.02</span>
<span class="t c sm" style="left:95px;top:327.5px;width:40px">0.00</span>
<span class="t c sm" style="left:136px;top:327.5px;width:40px">1.00</span>
<span class="t c sm" style="left:177px;top:327.5px;width:40px">0.85</span>
<span class="t c sm" style="left:218px;top:327.5px;width:41px">0.13</span>

<!-- scrollbar -->
<div class="a" style="left:281px;top:1px;width:17px;height:346px;background:#f1f1f1"></div>
<div class="a" style="left:282.5px;top:19px;width:14.5px;height:258px;background:linear-gradient(90deg,#d6d6d6,#f2f2f2 30%,#e4e4e4 60%,#c8c8c8);border:1px solid #a8a8a8;border-radius:2px"></div>
<svg class="a" style="left:281px;top:0" width="17" height="348">
<path d="M5.5,11 L8.5,8 L11.5,11 Z" fill="#333"/>
<path d="M5.5,336 L8.5,339 L11.5,336 Z" fill="#333"/>
<g stroke="#666" stroke-width="1"><path d="M6,145.5 H11 M6,147.5 H11 M6,149.5 H11"/></g>
</svg>
</div>

<div id="status" class="a">
<div class="a" style="left:2px;top:3px;width:11px;height:11px;border-radius:50%;background:#ee1111"></div>
<div class="a" style="left:199px;top:2px;width:1px;height:16px;background:#d8d6d4"></div>
<div class="a" style="left:688px;top:6px;width:307px;height:11px;border:1px solid #b8b8b8;border-radius:3px;background:linear-gradient(#f4f4f4,#dcdcdc 60%,#d0d0d0)"></div>
</div>
</body></html>
